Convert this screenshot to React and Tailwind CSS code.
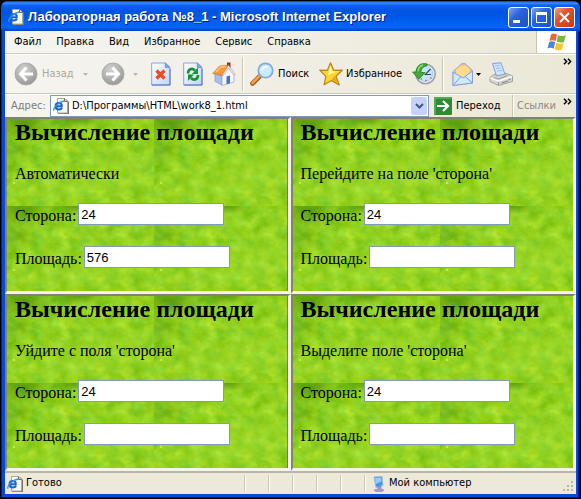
import React, { useId } from "react";

const UI_FONT = "font-['DejaVu_Sans_Condensed','DejaVu_Sans',sans-serif]";

function PageIcon({ className }) {
  return (
    <svg viewBox="0 0 16 16" className={className} aria-hidden="true">
      <path d="M5 1h8l3 3v12H5z" fill="#77736a" />
      <path d="M4.500.5h7l3 3v11.500h-10z" fill="#f8f8f2" stroke="#aaa694" />
      <path d="M11.500.5v3h3" fill="#d6d2c2" stroke="#6e6a60" />
      <path d="M3 8.300h5.800c.2-2.300-1.200-3.400-2.900-3.400-2 0-3.400 1.400-3.400 3.300 0 2 1.500 3.300 3.500 3.300 1.400 0 2.500-.7 3-1.700" fill="none" stroke="#1767c9" strokeWidth="2" />
      <path d="M1.200 12.700C-.8 11 5 4 11 3" fill="none" stroke="#3a94e6" strokeWidth="1.300" />
    </svg>
  );
}

function Round({ flip }) {
  const id = useId();
  return (
    <svg viewBox="0 0 24 24" className="size-6 shrink-0" aria-hidden="true">
      <defs>
        <radialGradient id={id} cx=".4" cy=".3" r=".75">
          <stop offset="0" stopColor="#d2d2d0" />
          <stop offset="1" stopColor="#969694" />
        </radialGradient>
      </defs>
      <circle cx="12" cy="12" r="11" fill={`url(#${id})`} stroke="#a7a7a3" strokeWidth=".8" />
      <g transform={flip ? "matrix(-1 0 0 1 24 0)" : undefined} fill="none" stroke="#fff" strokeWidth="3">
        <path d="M12.500 5.500 6.500 12l6 6.500M7 12h12" />
      </g>
    </svg>
  );
}

function Doc({ children }) {
  const id = useId();
  return (
    <svg viewBox="0 0 20 24" className="h-6 w-5 shrink-0" aria-hidden="true">
      <defs>
        <linearGradient id={id} x1="0" y1="0" x2="1" y2="1">
          <stop offset="0" stopColor="#fff" />
          <stop offset="1" stopColor="#bcd4fa" />
        </linearGradient>
      </defs>
      <path d="M.7 1h13.600L19 5.600V23H.7z" fill={`url(#${id})`} stroke="#8ba2dc" />
      <path d="M14.300 1v4.600H19z" fill="#7fa4ec" stroke="#6582c6" strokeWidth=".7" />
      <path d="M1 23h18V7" fill="none" stroke="#5a74b6" />
      {children}
    </svg>
  );
}

function HomeIcon() {
  return (
    <svg viewBox="0 0 24 24" className="size-6 shrink-0" aria-hidden="true">
      <path d="M15 .500h3.500v7H15z" fill="#9a2a1c" />
      <path d="M3 12l7 2v9l-7-3.500z" fill="#a9c0ec" stroke="#7890c8" strokeWidth=".6" />
      <path d="M10 14l6.500-8.500L22 13v7l-12 3.500z" fill="#f2f6ff" stroke="#8fa2d0" strokeWidth=".7" />
      <path d="M.8 11.500 7.500 4l9-.800L10 13.500z" fill="#f79a3c" stroke="#cf6b1c" strokeWidth=".6" />
      <path d="M4 10l4.500-5 5-.5" fill="none" stroke="#ffc98a" strokeWidth="1.300" />
      <path d="M16.500 3.200 23.500 12.500l-1.500.8-5.500-7.300L11 14l-1-.500z" fill="#e8ebf4" stroke="#b0865e" strokeWidth=".4" />
      <path d="M14.500 14.500l3.500-1v7.700l-3.500 1z" fill="#4f71bd" />
    </svg>
  );
}

function SearchIcon() {
  return (
    <svg viewBox="0 0 24 24" className="size-6 shrink-0" aria-hidden="true">
      <path d="M2.500 21.500 9.500 14.500" stroke="#a45a1e" strokeWidth="4.600" strokeLinecap="round" />
      <path d="M2.500 21 9 14.500" stroke="#f5a04a" strokeWidth="2.600" strokeLinecap="round" />
      <circle cx="15.500" cy="8.500" r="7.200" fill="#c9ebfd" stroke="#8aa6dc" strokeWidth="1.800" />
      <path d="M11 9.500a5 5 0 0 1 5-5.500c1 0 2 .4 2.500 1C15 5.500 12.500 7 11 9.500z" fill="#fff" />
    </svg>
  );
}

function StarIcon() {
  return (
    <svg viewBox="0 0 24 24" className="size-6 shrink-0" aria-hidden="true">
      <path d="M11.500.8l3.300 7.500 8.500-.1-6.300 6 3.300 8.700-7.800-4.300-7.400 4.200 1.700-8.500L.7 8.200l7.700.1z" fill="#fbd62c" stroke="#b9851a" strokeWidth="1.200" strokeLinejoin="round" />
      <path d="M11.500 3.500l1.800 6 6.500.1-4.500 1L9 13z" fill="#fff6a8" />
      <path d="M12.500 17.500l6 3.300-2.500-7z" fill="#e9a61c" />
    </svg>
  );
}

function HistoryIcon() {
  return (
    <svg viewBox="0 0 24 24" className="size-6 shrink-0" aria-hidden="true">
      <circle cx="13.500" cy="12" r="9.700" fill="#e6eef6" stroke="#9aa2ac" strokeWidth="1.600" />
      <circle cx="13.500" cy="12" r="7.400" fill="#c5e4fa" stroke="#a3bdd8" strokeWidth=".7" />
      <path d="M13 12.800 18.500 7M12.500 12.500h6.500" stroke="#264870" strokeWidth="1.200" />
      <g fill="#e0523a"><circle cx="14" cy="18.500" r=".8" /><circle cx="19" cy="16" r=".8" /><circle cx="9.500" cy="17" r=".8" /></g>
      <path d="M15 2C8 .500 4.500 4 4.200 10H.6l6.200 7.200L13 10.500H9C9 7 10.500 4.500 15 3.700z" fill="#44aa38" stroke="#1f7a22" strokeWidth=".8" />
      <path d="M6 9.500C6.200 6 8 3.800 11 3" fill="none" stroke="#98db7c" strokeWidth="1.300" />
    </svg>
  );
}

function MailIcon() {
  return (
    <svg viewBox="0 0 22 24" className="h-6 w-[22px] shrink-0" aria-hidden="true">
      <path d="M1 9.500 10 1.500h3l7.500 7V21L1 23.500z" fill="#c3cdf0" stroke="#a1a6dc" />
      <path d="M3.500 7.500 9 3h5l4.500 4.500V11L11 17 3.500 12z" fill="#ffdb8a" stroke="#e3a34b" strokeWidth=".6" />
      <path d="M1 10 11 16l9.500-7V21L1 23.500z" fill="#cfeafd" stroke="#8b9ddb" />
      <path d="M1 23.500 8.500 15M20.500 21l-7.500-6.500" stroke="#7b9ed9" />
    </svg>
  );
}

function PrintIcon() {
  return (
    <svg viewBox="0 0 24 24" className="size-6 shrink-0" aria-hidden="true">
      <path d="M3.500 1.500 12 .8 16 12.500 7.500 14z" fill="#cfe5ff" stroke="#7aa0e0" />
      <path d="M6 4l5-.500M7 6.500l5-.500M8 9l5-.500" stroke="#9abff0" />
      <path d="M1 15.500 6 12l1.500 2 9-2-.5-1 7.500 3v5.500L9.500 23.500 1 19.500z" fill="#d4d4d3" stroke="#9a9a99" strokeWidth=".9" />
      <path d="M1.500 16 9.500 19 23 14.500" fill="none" stroke="#fafafa" strokeWidth="1.500" />
      <path d="M9.500 20v3M5 15.500l4.500 1.500 9-3.500" fill="none" stroke="#999997" />
      <path d="M12.500 21l7-2.300" stroke="#88888a" strokeWidth="1.200" />
      <path d="M19.500 17.300h2" stroke="#42ae3b" />
    </svg>
  );
}

function WindowsLogo() {
  return (
    <svg viewBox="0 0 20 18" className="h-[18px] w-5" aria-hidden="true">
      <path d="M4 1.500C6 .3 8 .3 10 1.700L8.500 8.200C6.500 7 4.500 7 2.500 8z" fill="#ee6436" />
      <path d="M11 2.200c2.500 1 5 1.200 7.800.1L17 9c-2.500 1-5 .7-7.300-.4z" fill="#79b83d" />
      <path d="M2.200 9c2-1 4-.9 6 .3L6.700 15.700c-2-1.200-4-1.200-6.200-.3z" fill="#4b86d9" />
      <path d="M9.300 9.700c2.500 1.200 5 1.400 7.500.3L15 16.500c-2.500 1.200-5 .9-7.300-.3z" fill="#f9c42d" />
    </svg>
  );
}

function Chevrons({ className }) {
  return (
    <button type="button" aria-label="»" className={className}>
      <svg viewBox="0 0 9 7" className="h-[7px] w-[9px]" aria-hidden="true">
        <path d="M1 .8 3.600 3.500 1 6.200M5 .8l2.600 2.700L5 6.200" fill="none" stroke="#000" strokeWidth="1.500" />
      </svg>
    </button>
  );
}

function Caret({ color }) {
  return (
    <svg viewBox="0 0 5 3" className="h-[3px] w-[5px] shrink-0" aria-hidden="true">
      <path d="M0 0h5L2.500 3z" fill={color} />
    </svg>
  );
}

function Divider({ className }) {
  return <span className={`w-[2px] shrink-0 border-r border-white bg-[#c9c6b6] ${className}`} />;
}

function Grass() {
  const id = useId();
  return (
    <svg className="absolute inset-0 size-full" aria-hidden="true">
      <defs>
        <filter id={`${id}n`} x="0" y="0" width="1" height="1" colorInterpolationFilters="sRGB">
          <feTurbulence type="fractalNoise" baseFrequency=".08 .09" numOctaves="4" seed="12" />
          <feColorMatrix values=".34 0 0 0 .4  .18 .08 0 0 .69  .1 .2 0 0 -.02  0 0 0 0 1" />
        </filter>
        <radialGradient id={`${id}d`}>
          <stop offset="0" stopColor="#2f7400" stopOpacity=".6" />
          <stop offset="1" stopColor="#3c8200" stopOpacity="0" />
        </radialGradient>
        <radialGradient id={`${id}l`}>
          <stop offset="0" stopColor="#a8de34" stopOpacity=".4" />
          <stop offset="1" stopColor="#a8de34" stopOpacity="0" />
        </radialGradient>
        <pattern id={`${id}p`} width="147" height="87" patternUnits="userSpaceOnUse">
          <rect width="147" height="87" fill="#8cc81c" filter={`url(#${id}n)`} />
          <ellipse cx="16" cy="4" rx="40" ry="20" fill={`url(#${id}d)`} />
          <ellipse cx="70" cy="0" rx="30" ry="10" fill={`url(#${id}d)`} />
          <ellipse cx="6" cy="32" rx="24" ry="14" fill={`url(#${id}d)`} opacity=".5" />
          <ellipse cx="112" cy="56" rx="56" ry="34" fill={`url(#${id}l)`} />
          <ellipse cx="50" cy="66" rx="44" ry="24" fill={`url(#${id}l)`} />
          <circle cx="7" cy="64" r="1" fill="#d9ef4e" />
        </pattern>
      </defs>
      <rect width="100%" height="100%" fill={`url(#${id}p)`} />
    </svg>
  );
}

function Field({ label, value }) {
  const id = useId();
  return (
    <div className="flex h-[22px] items-end gap-[2px]">
      <label htmlFor={id} className="leading-[18px]">{label}</label>
      <input
        id={id}
        defaultValue={value}
        className="h-[22px] w-[146px] border border-[#7f9db9] bg-white px-[2px] font-['Liberation_Sans',sans-serif] text-[13px] text-black outline-none"
      />
    </div>
  );
}

function Panel({ note, area }) {
  return (
    <section className="relative border-t-2 border-r-3 border-b-3 border-l-2 border-t-[#85816f] border-r-[#f5f3ea] border-b-[#f5f3ea] border-l-[#85816f]">
      <Grass />
      <div className="relative px-2 font-['Liberation_Serif',serif] text-[16px] text-black">
        <h1 className="text-[24px] leading-[27px] font-bold whitespace-nowrap">Вычисление площади</h1>
        <p className="mt-[19px] mb-5 leading-[18px] whitespace-nowrap">{note}</p>
        <div className="flex flex-col gap-[21px]">
          <Field label="Сторона:" value="24" />
          <Field label="Площадь:" value={area} />
        </div>
      </div>
    </section>
  );
}

const captionButton = "flex size-[21px] items-center justify-center rounded-[3px] border border-white";

export default function App() {
  return (
    <div className="min-h-screen bg-black p-px">
      <div className={`flex min-h-[calc(100vh-2px)] flex-col rounded-t-[7px] bg-[#0a48d8] px-1 pb-1 text-[11px] text-black shadow-[inset_1px_0_#0019cf,inset_-2px_-1px_#00138c] ${UI_FONT}`}>
        <header className="-mx-1 flex h-[30px] items-center gap-[2px] rounded-t-[7px] bg-[linear-gradient(#0a3fc4_0%,#3a90fb_7%,#0f62ee_14%,#0054e0_35%,#005cf0_65%,#0066fe_88%,#003fc0_100%)] pt-[2px] pr-[5px] pl-[7px]">
          <PageIcon className="size-4 shrink-0" />
          <h2 className="min-w-0 flex-1 overflow-hidden pl-[2px] font-['Liberation_Sans',sans-serif] text-[13px] leading-[18px] font-bold whitespace-nowrap text-white [text-shadow:1px_1px_#0a1883]">
            Лабораторная работа №8_1 - Microsoft Internet Explorer
          </h2>
          <button type="button" aria-label="Свернуть" className={`${captionButton} bg-[linear-gradient(135deg,#7ba3f5,#2a62dd_40%,#1c4fcc)]`}>
            <span className="mt-2 mr-1 h-[3px] w-[7px] bg-white" />
          </button>
          <button type="button" aria-label="Развернуть" className={`${captionButton} bg-[linear-gradient(135deg,#7ba3f5,#2a62dd_40%,#1c4fcc)]`}>
            <span className="h-[11px] w-[11px] border border-t-3 border-white" />
          </button>
          <button type="button" aria-label="Закрыть" className={`${captionButton} bg-[linear-gradient(135deg,#f0a088,#e0512b_40%,#c43a16)]`}>
            <svg viewBox="0 0 11 11" className="size-[11px]" aria-hidden="true">
              <path d="M1 1l9 9M10 1l-9 9" stroke="#fff" strokeWidth="2" />
            </svg>
          </button>
        </header>

        <nav className="flex h-[23px] border-b border-[#d0cdbd] bg-[linear-gradient(90deg,#f5f4f0,#ece9d8)]">
          <div className="flex flex-1 items-center gap-[15px] pl-[9px] whitespace-nowrap">
            <button type="button">Файл</button>
            <button type="button">Правка</button>
            <button type="button">Вид</button>
            <button type="button">Избранное</button>
            <button type="button">Сервис</button>
            <button type="button">Справка</button>
          </div>
          <div className="flex w-10 items-center justify-center border-l border-[#c9c6b6] bg-white">
            <WindowsLogo />
          </div>
        </nav>

        <div className="flex h-[40px] items-center border-t border-b border-t-white border-b-[#cbc8b8] bg-[linear-gradient(90deg,#f5f4f0,#ebe8d7)] pl-[9px] whitespace-nowrap">
          <button type="button" disabled className="flex w-[87px] items-center gap-1 text-[#aca899]">
            <Round />
            <span className="w-[37px] text-left">Назад</span>
            <Caret color="#bab7aa" />
          </button>
          <button type="button" disabled aria-label="Вперёд" className="flex w-[50px] items-center gap-2">
            <Round flip />
            <Caret color="#bab7aa" />
          </button>
          <button type="button" aria-label="Остановить" className="w-8">
            <Doc>
              <path d="M5.500 8.500l8 8M13.500 8.500l-8 8" stroke="#f04a20" strokeWidth="3.200" />
            </Doc>
          </button>
          <button type="button" aria-label="Обновить" className="w-[29px]">
            <Doc>
              <path d="M5 11.500C5 7 9 5.500 12 8.500M15 13c0 4.500-4 6-7 3" fill="none" stroke="#14922c" strokeWidth="2.600" />
              <path d="M15 5.500v6.500H9zM5 19v-6.500h6z" fill="#14922c" />
            </Doc>
          </button>
          <button type="button" aria-label="Домой"><HomeIcon /></button>
          <Divider className="mx-[6px] h-[34px]" />
          <button type="button" className="flex w-[69px] items-center gap-1"><SearchIcon />Поиск</button>
          <button type="button" className="flex w-[93px] items-center gap-[3px]"><StarIcon />Избранное</button>
          <button type="button" aria-label="Журнал"><HistoryIcon /></button>
          <Divider className="mr-2 ml-[6px] h-[34px]" />
          <button type="button" aria-label="Почта" className="flex w-[37px] items-center gap-[2px]">
            <MailIcon />
            <Caret color="#000" />
          </button>
          <button type="button" aria-label="Печать"><PrintIcon /></button>
          <Chevrons className="mt-[3px] mr-[4px] ml-auto self-start" />
        </div>

        <div className="flex h-[23px] items-center border-t border-white bg-[linear-gradient(90deg,#f5f4f0,#ebe8d7)] pl-[6px] whitespace-nowrap">
          <label htmlFor="address" className="w-[39px] text-[#7d7b72]">Адрес:</label>
          <div className="flex h-[22px] min-w-0 flex-1 items-center gap-[3px] border border-[#7f9db9] bg-white pr-px pl-[2px]">
            <PageIcon className="size-4 shrink-0" />
            <input id="address" defaultValue="D:\Программы\HTML\work8_1.html" className="min-w-0 flex-1 bg-transparent outline-none" />
            <button type="button" aria-label="Показать список адресов" className="flex h-[18px] w-4 items-center justify-center rounded-[2px] bg-[#c3d3fc]">
              <svg viewBox="0 0 9 6" className="h-[6px] w-[9px]" aria-hidden="true">
                <path d="M1 1l3.500 3.500L8 1" fill="none" stroke="#42587f" strokeWidth="2" />
              </svg>
            </button>
          </div>
          <button type="button" className="ml-[5px] flex w-[78px] items-center gap-1">
            <svg viewBox="0 0 18 18" className="size-[18px]" aria-hidden="true">
              <rect width="18" height="18" rx="1" fill="#2d8b36" />
              <path d="M1 17V1h16" fill="none" stroke="#7cc07d" />
              <path d="M3 9h11M9 4l5 5-5 5" fill="none" stroke="#fff" strokeWidth="2.200" />
            </svg>
            Переход
          </button>
          <Divider className="h-[22px]" />
          <span className="w-[49px] pl-[3px] text-[#8b897e]">Ссылки</span>
          <Chevrons className="mt-[3px] mr-[4px] self-start" />
        </div>

        <main className="grid flex-1 grid-cols-2 grid-rows-2">
          <Panel note="Автоматически" area="576" />
          <Panel note="Перейдите на поле 'сторона'" area="" />
          <Panel note="Уйдите с поля 'сторона'" area="" />
          <Panel note="Выделите поле 'сторона'" area="" />
        </main>

        <footer className="flex h-[23px] items-center border-t-2 border-[#b9b6a6] bg-[#ece9d8] pl-[2px]">
          <PageIcon className="size-4 shrink-0" />
          <span className="flex-1 pl-[3px]">Готово</span>
          <div className="flex gap-[22px]">
            <Divider className="h-[17px]" />
            <Divider className="h-[17px]" />
            <Divider className="h-[17px]" />
            <Divider className="h-[17px]" />
            <Divider className="h-[17px]" />
            <Divider className="h-[17px]" />
          </div>
          <div className="flex w-[210px] items-center gap-[3px] pl-[6px]">
            <svg viewBox="0 0 14 16" className="h-4 w-[14px]" aria-hidden="true">
              <path d="M2 1 10 .500l1 9-7 2z" fill="#3f97f0" stroke="#a5b6cf" />
              <path d="M3 2l6-.400.500 4L3.700 8z" fill="#8fd0ff" />
              <path d="M6 11l3-1v3l3 1-2 1.500H4L2 14l4-1z" fill="#9da0c4" stroke="#7377a2" strokeWidth=".5" />
            </svg>
            <span className="flex-1">Мой компьютер</span>
            <svg viewBox="0 0 12 12" className="mr-[2px] size-3 self-end" aria-hidden="true">
              <path d="M9 1h2v2H9zM5 5h2v2H5zM9 5h2v2H9zM1 9h2v2H1zM5 9h2v2H5zM9 9h2v2H9z" fill="#b8b4a2" />
            </svg>
          </div>
        </footer>
      </div>
    </div>
  );
}
